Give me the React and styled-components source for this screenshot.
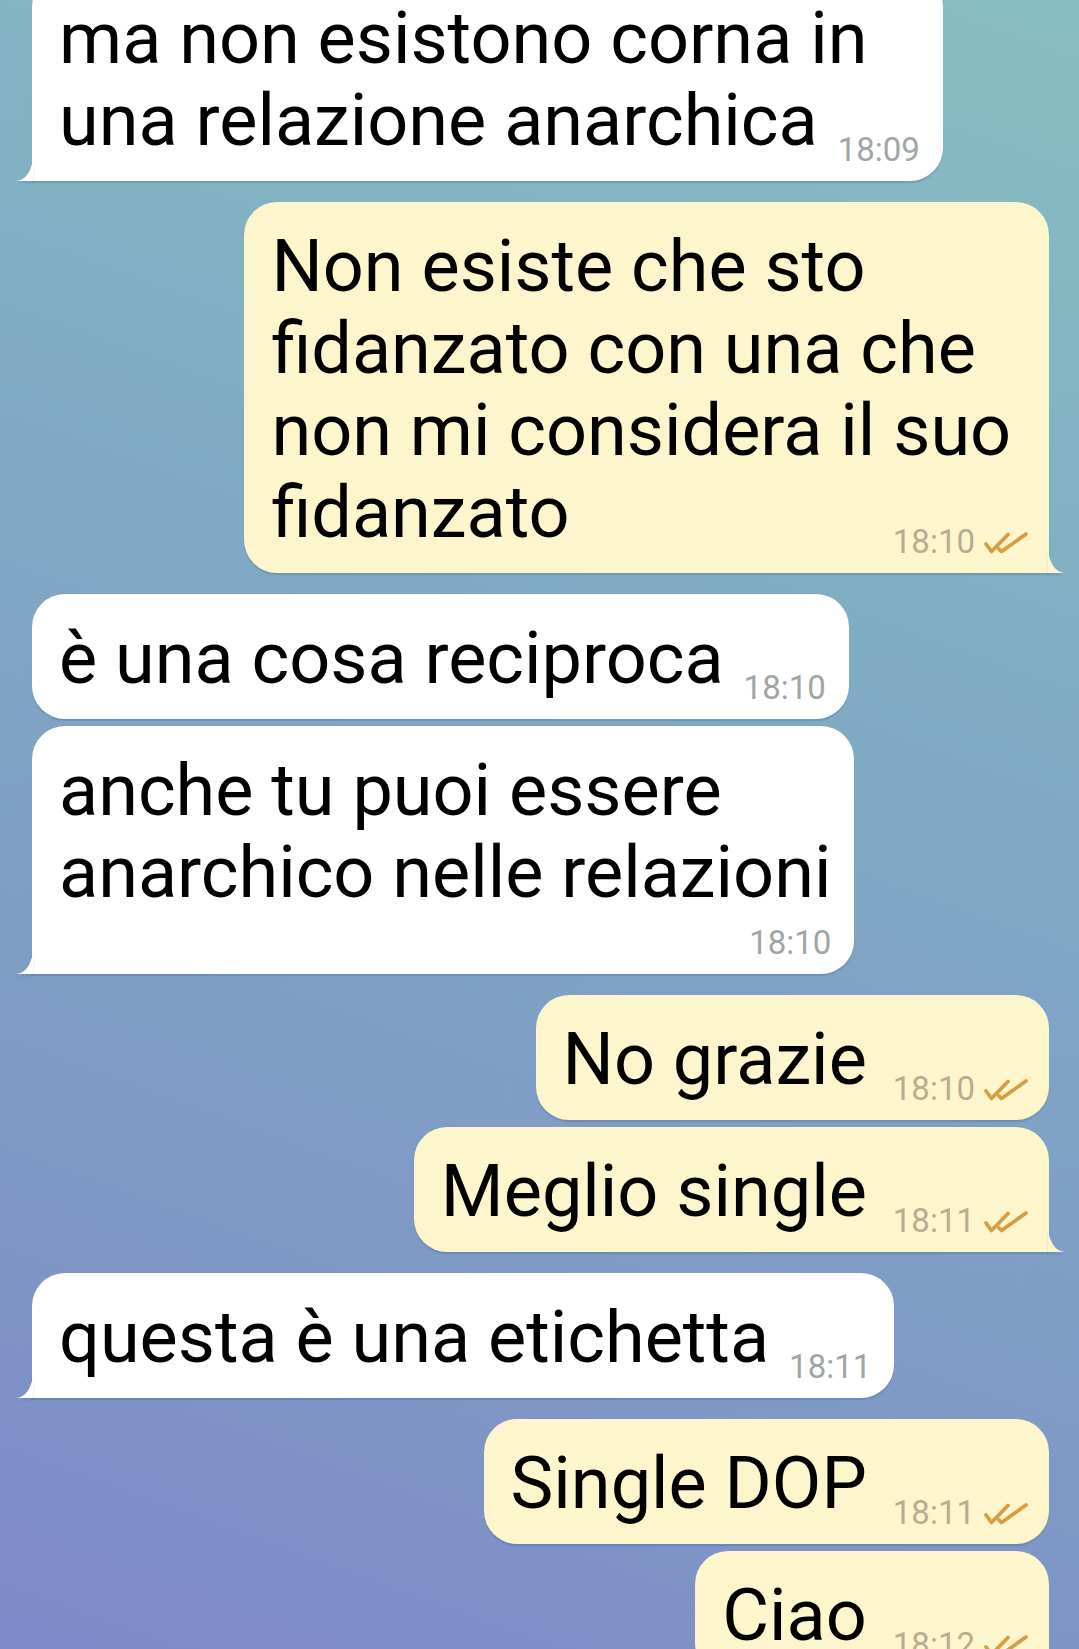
import styled, { createGlobalStyle } from 'styled-components';

const GlobalStyle = createGlobalStyle`
html, body {
  margin: 0;
  padding: 0;
}
body {
  font-family: Roboto, "Noto Sans", sans-serif;
}
`;

// lines keep their trailing space, as the wrapped text does
const messages = [
  { id: 1, out: false, lines: ['ma non esistono corna in ', 'una relazione anarchica'], time: '18:09', tail: true },
  { id: 2, out: true, lines: ['Non esiste che sto ', 'fidanzato con una che ', 'non mi considera il suo ', 'fidanzato'], time: '18:10', tail: true, groupStart: true },
  { id: 3, out: false, lines: ['è una cosa reciproca'], time: '18:10', groupStart: true },
  { id: 4, out: false, lines: ['anche tu puoi essere ', 'anarchico nelle relazioni'], time: '18:10', tail: true, timeBelow: true },
  { id: 5, out: true, lines: ['No grazie'], time: '18:10', groupStart: true },
  { id: 6, out: true, lines: ['Meglio single'], time: '18:11', tail: true },
  { id: 7, out: false, lines: ['questa è una etichetta'], time: '18:11', tail: true, groupStart: true },
  { id: 8, out: true, lines: ['Single DOP'], time: '18:11', groupStart: true },
  { id: 9, out: true, lines: ['Ciao'], time: '18:12', tail: true },
];

function Checks() {
  return (
    <CheckIcon viewBox="0 0 46 22" width="46" height="22">
      <path d="M3 12 L8.5 19.5 L25 2.5" />
      <path d="M16 17 L18.5 19.5 L43 2" />
    </CheckIcon>
  );
}

function Message({ out, lines, time, tail, groupStart, timeBelow }) {
  const body = lines.slice(0, -1);
  const last = lines[lines.length - 1];
  return (
    <Bubble $out={out} $tail={tail} $groupStart={groupStart}>
      {body.map(line => <Line key={line}>{line}</Line>)}
      <LastRow $out={out} $below={timeBelow}>
        <Line>{last}</Line>
        <Meta $out={out} $below={timeBelow}>
          <span>{time}</span>
          {out && <Checks />}
        </Meta>
      </LastRow>
      {tail && (
        <Tail $out={out} viewBox="0 0 17 26" width="17" height="26">
          <path d="M0 26 A17 26 0 0 0 17 0 L17 26 Z" />
        </Tail>
      )}
    </Bubble>
  );
}

export default function App() {
  return (
    <>
      <GlobalStyle />
      <Chat>
        <List>
          {messages.map(item => <Message key={item.id} {...item} />)}
        </List>
      </Chat>
    </>
  );
}

const Chat = styled.div`
height: 100vh;
overflow: hidden;
background: linear-gradient(200deg, #87bec1 0%, #80aac4 40%, #7f98c6 75%, #7e8ac8 100%);
`;

const List = styled.div`
display: flex;
flex-direction: column;
padding: 0 30px 0 32px;
margin-top: -33px;
`;

const Bubble = styled.div`
position: relative;
display: flex;
flex-direction: column;
align-self: ${p => (p.$out ? 'flex-end' : 'flex-start')};
margin-top: ${p => (p.$groupStart ? '21px' : '7px')};
padding: 24px ${p => (p.$out ? '20px' : '23px')} 19px 27px;
border-radius: 33px;
${p => p.$tail && (p.$out ? 'border-bottom-right-radius: 0;' : 'border-bottom-left-radius: 0;')}
background: ${p => (p.$out ? '#fdf6cd' : '#ffffff')};
box-shadow: 0 2px 1px rgba(40, 60, 100, 0.18);
color: #000;
font-size: 72px;
line-height: 82px;
`;

const Line = styled.div`
white-space: pre;
`;

const LastRow = styled.div`
display: flex;
flex-direction: ${p => (p.$below ? 'column' : 'row')};
align-items: flex-end;
justify-content: space-between;
gap: ${p => (p.$below ? '0' : p.$out ? '26px' : '20px')};
`;

const Meta = styled.div`
display: flex;
align-items: center;
gap: 8px;
margin-top: ${p => (p.$below ? '12px' : '0')};
margin-bottom: -5px;
font-size: 33px;
line-height: 34px;
color: ${p => (p.$out ? '#b8ad8f' : '#a0a6a4')};
`;

const CheckIcon = styled.svg`
margin-top: 2px;
fill: none;
stroke: #d89d42;
stroke-width: 3.8;
stroke-linecap: round;
stroke-linejoin: round;
`;

const Tail = styled.svg`
position: absolute;
bottom: 0;
${p => (p.$out ? 'right: -16px; transform: scaleX(-1);' : 'left: -16px;')}
fill: ${p => (p.$out ? '#fdf6cd' : '#ffffff')};
filter: drop-shadow(0 2px 1px rgba(40, 60, 100, 0.18));
`;
